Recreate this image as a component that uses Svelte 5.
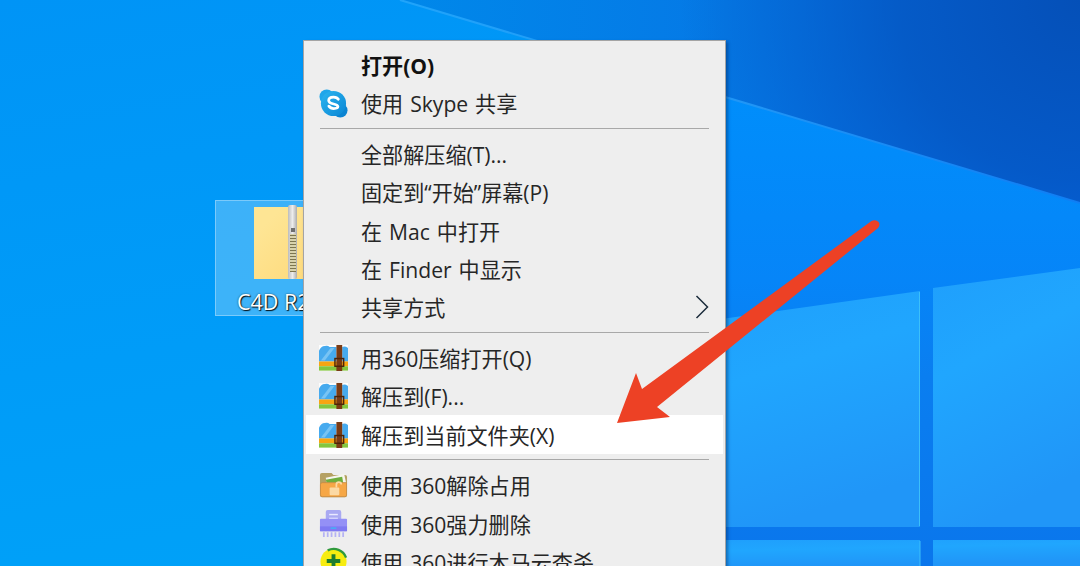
<script>
  const groups = [
    [
      { label: '打开(O)', bold: true },
      { label: '使用 Skype 共享', icon: 'skype' }
    ],
    [
      { label: '全部解压缩(T)...' },
      { label: '固定到“开始”屏幕(P)' },
      { label: '在 Mac 中打开' },
      { label: '在 Finder 中显示' },
      { label: '共享方式', more: true }
    ],
    [
      { label: '用360压缩打开(Q)', icon: 'zip' },
      { label: '解压到(F)...', icon: 'zip' },
      { label: '解压到当前文件夹(X)', icon: 'zip', active: true }
    ],
    [
      { label: '使用 360解除占用', icon: 'unlock' },
      { label: '使用 360强力删除', icon: 'shred' },
      { label: '使用 360进行木马云查杀', icon: 'scan' }
    ]
  ];
</script>

{#snippet icon(name)}
  {#if name === 'skype'}
    <svg class="ico" viewBox="0 0 30 30" aria-hidden="true">
      <defs>
        <linearGradient id="sky" x1="0" y1="0" x2="1" y2="1">
          <stop offset="0" stop-color="#2bb5f0" />
          <stop offset="1" stop-color="#0a86d4" />
        </linearGradient>
      </defs>
      <circle cx="8" cy="8" r="7.500" fill="#1fa6ea" />
      <circle cx="22" cy="22" r="7.500" fill="#0b84d2" />
      <circle cx="15" cy="15" r="13" fill="url(#sky)" />
      <path d="M20 10.600c-.8-1.500-2.700-2.300-5-2.300-2.900 0-5 1.400-5 3.600 0 4.500 9.600 2.700 9.600 6.300 0 1.200-1.500 2-4.300 2-2.400 0-4-.9-5.100-2.500" fill="none" stroke="#fff" stroke-width="2.800" stroke-linecap="round" />
    </svg>
  {:else if name === 'zip'}
    <svg class="ico" viewBox="0 0 30 27" aria-hidden="true">
      <rect x="0" y="0" width="30" height="27" fill="#fdfdfd" />
      <path d="M0 6q2-5 6-5 3-1 5 1h7v15H0z" fill="#46aaee" />
      <path d="M2 16 12 3h4L6 16z" fill="#78c4f4" />
      <path d="M24 2q3-1 6 1v14h-6z" fill="#46aaee" />
      <rect x="0" y="17" width="30" height="5" fill="#f7a512" />
      <rect x="0" y="22" width="30" height="4.500" fill="#84c63e" />
      <rect x="18" y="0" width="6" height="27" fill="#7a3b14" />
      <rect x="16.500" y="14" width="9" height="8" fill="none" stroke="#4d2408" stroke-width="1.500" />
    </svg>
  {:else if name === 'unlock'}
    <svg class="ico" viewBox="0 0 30 27" aria-hidden="true">
      <path d="M1 3q0-2 2-2h10l2 2h12q2 0 2 2v19q0 2-2 2H3q-2 0-2-2z" fill="#b5a163" />
      <path d="M7 6 26 2l2 9H8z" fill="#f6f6ee" />
      <path d="M7 8 24 5l1 6H8z" fill="#6fae3c" />
      <path d="M1.500 13q0-2 2-2h25v13q0 1.500-2 1.500H3.500q-2 0-2-2z" fill="#f6a746" stroke="#c88a44" stroke-width=".8" />
      <rect x="11" y="16" width="10" height="8" rx="1" fill="#fbd9a4" />
      <path d="M18 16v-3q0-2.500 2.500-2.500T23 13" fill="none" stroke="#fbd9a4" stroke-width="1.800" />
    </svg>
  {:else if name === 'shred'}
    <svg class="ico" viewBox="0 0 30 30" aria-hidden="true">
      <path d="M7 3q0-2 2-2h12q2 0 2 2v9H7z" fill="#a9a9f2" />
      <rect x="10.500" y="5" width="9" height="1.500" fill="#e9e9ff" />
      <rect x="10.500" y="9" width="9" height="1.500" fill="#e9e9ff" />
      <rect x="1" y="10" width="28" height="13" rx="1" fill="#9490f6" />
      <rect x="1" y="18" width="28" height="5" fill="#7f7af2" />
      <rect x="12" y="19" width="6" height="1.500" fill="#3fb5f5" />
      <path d="M5 24v5M9 24v5M13 24v5M17 24v5M21 24v5M25 24v5" stroke="#b4b2f4" stroke-width="1.800" />
    </svg>
  {:else if name === 'scan'}
    <svg class="ico" viewBox="0 0 30 30" aria-hidden="true">
      <circle cx="15" cy="15" r="13.500" fill="#f7ec10" />
      <path d="M9 3.500A13.500 13.500 0 0 1 28 11" fill="none" stroke="#2f9a3c" stroke-width="2.400" />
      <path d="M15 7.500v14M8 14.500h14" stroke="#1f7d2e" stroke-width="4" />
    </svg>
  {/if}
{/snippet}

<main class="desktop">
  <svg class="wallpaper" viewBox="0 0 1080 566" aria-hidden="true">
    <defs>
      <linearGradient id="lower" gradientUnits="userSpaceOnUse" x1="0" y1="90" x2="0" y2="566">
        <stop offset="0" stop-color="#008efb" />
        <stop offset="0.400" stop-color="#0685f8" />
        <stop offset="0.600" stop-color="#0a7ef0" />
        <stop offset="1" stop-color="#0a76ec" />
      </linearGradient>
      <linearGradient id="upper" gradientUnits="userSpaceOnUse" x1="400" y1="0" x2="1080" y2="0">
        <stop offset="0" stop-color="#0088ea" />
        <stop offset="0.480" stop-color="#0579e6" />
        <stop offset="1" stop-color="#056ff0" />
      </linearGradient>
      <radialGradient id="shade" gradientUnits="userSpaceOnUse" cx="1080" cy="0" r="400">
        <stop offset="0" stop-color="#0550b8" />
        <stop offset="0.450" stop-color="#0550b8" stop-opacity="0.700" />
        <stop offset="1" stop-color="#0550b8" stop-opacity="0" />
      </radialGradient>
      <linearGradient id="pane" x1="0" y1="0" x2="0.300" y2="1">
        <stop offset="0" stop-color="#1f9ffc" />
        <stop offset="0.400" stop-color="#20a6fe" />
        <stop offset="1" stop-color="#2096f8" />
      </linearGradient>
      <linearGradient id="ray" gradientUnits="userSpaceOnUse" x1="400" y1="0" x2="1080" y2="0">
        <stop offset="0" stop-color="#20a4fa" />
        <stop offset="0.500" stop-color="#2096f6" />
        <stop offset="1" stop-color="#0f7ef4" />
      </linearGradient>
    </defs>
    <path d="M700 40 1080 203V566H700z" fill="url(#lower)" />
    <path d="M400 0H1080V203z" fill="url(#upper)" />
    <path d="M400 0H1080V203z" fill="url(#shade)" />
    <path d="M400 0 1080 203" stroke="url(#ray)" stroke-width="2" fill="none" />
    <path d="M700 322 920 291V527H700z" fill="url(#pane)" />
    <path d="M933 288 1080 268V527H933z" fill="url(#pane)" />
    <path d="M700 540H920V566H700zM933 540H1080V566H933z" fill="url(#pane)" />
    <path d="M919.500 292V526M920 541V566" stroke="#3cc0fa" stroke-width="1" />
  </svg>

  <div class="file">
    <div class="folder">
      <div class="zipper"></div>
    </div>
    <div class="name">C4D R20</div>
  </div>

  <nav class="menu">
    {#each groups as group, g}
      {#if g > 0}<div class="sep"></div>{/if}
      {#each group as item}
        <div class="row" class:active={item.active} class:bold={item.bold}>
          <span class="slot">{#if item.icon}{@render icon(item.icon)}{/if}</span>
          <span class="label">{item.label}</span>
          {#if item.more}
            <svg class="more" viewBox="0 0 14 24" aria-hidden="true">
              <path d="M1.500 1 12.500 12 1.500 23" fill="none" stroke="#1c2c3c" stroke-width="1.500" />
            </svg>
          {/if}
        </div>
      {/each}
    {/each}
  </nav>

  <svg class="arrow" viewBox="0 0 1080 566" aria-hidden="true">
    <path d="M871.500 221 642 389 636 373 617 423 670 417 657 407 878 228Q881 224 878 221.500 875 219.500 871.500 221Z" fill="#ed4125" />
  </svg>
</main>

<style>
  :global(body) {
    margin: 0;
    overflow: hidden;
  }
  .desktop {
    position: relative;
    width: 1080px;
    height: 566px;
    overflow: hidden;
    background: linear-gradient(170deg, #0094f6 0%, #009cf8 50%, #00a4f8 100%);
    font-family: "Open Sans", "Noto Sans CJK SC", sans-serif;
  }
  .wallpaper,
  .arrow {
    position: absolute;
    inset: 0;
    width: 1080px;
    height: 566px;
    pointer-events: none;
  }
  .file {
    position: absolute;
    left: 215px;
    top: 200px;
    width: 180px;
    height: 116px;
    box-sizing: border-box;
    background: rgba(255, 255, 255, 0.24);
    border: 1px solid rgba(255, 255, 255, 0.32);
  }
  .folder {
    position: absolute;
    left: 38px;
    top: 6px;
    width: 72px;
    height: 72px;
    background: linear-gradient(135deg, #fee594 20%, #fed878 100%);
  }
  .zipper {
    position: absolute;
    left: 34px;
    top: -2px;
    width: 9px;
    height: 74px;
    background:
      linear-gradient(#6f6f6f, #6f6f6f) center 23px / 4px 4px no-repeat,
      repeating-linear-gradient(0deg, #7d7650 0 1px, #d8d2ac 1px 3px) center 29px / 6px 38px no-repeat,
      linear-gradient(90deg, #bcbcbc, #ececec 50%, #acacac);
    border-radius: 2px;
  }
  .name {
    position: absolute;
    left: 21px;
    top: 86px;
    font-size: 21.500px;
    line-height: 30px;
    color: #fff;
    white-space: nowrap;
    text-shadow: 1px 1px 1px rgba(0, 0, 0, 0.9), 0 0 2px rgba(0, 0, 0, 0.6);
  }
  .menu {
    position: absolute;
    left: 303px;
    top: 40px;
    width: 423px;
    box-sizing: border-box;
    padding: 5px 2px;
    background: #eeeeee;
    border: 1px solid #a4a4a4;
    box-shadow: 2px 2px 3px rgba(0, 40, 90, 0.45);
  }
  .row {
    display: flex;
    align-items: center;
    height: 38.300px;
    font-size: 21.100px;
    word-spacing: 1.500px;
    color: #262626;
    white-space: nowrap;
  }
  .row.bold {
    font-weight: 700;
    color: #111;
  }
  .row.active {
    background: #fff;
  }
  .slot {
    display: flex;
    align-items: center;
    flex: none;
    width: 55px;
    padding-left: 13px;
    box-sizing: border-box;
  }
  .ico {
    display: block;
    width: 29px;
    height: auto;
  }
  .label {
    flex: 1;
  }
  .more {
    width: 14px;
    height: 24px;
    margin-right: 14px;
    flex: none;
  }
  .sep {
    height: 1px;
    margin: 5.400px 14px 6px 14px;
    background: #a8a8a8;
  }
</style>
